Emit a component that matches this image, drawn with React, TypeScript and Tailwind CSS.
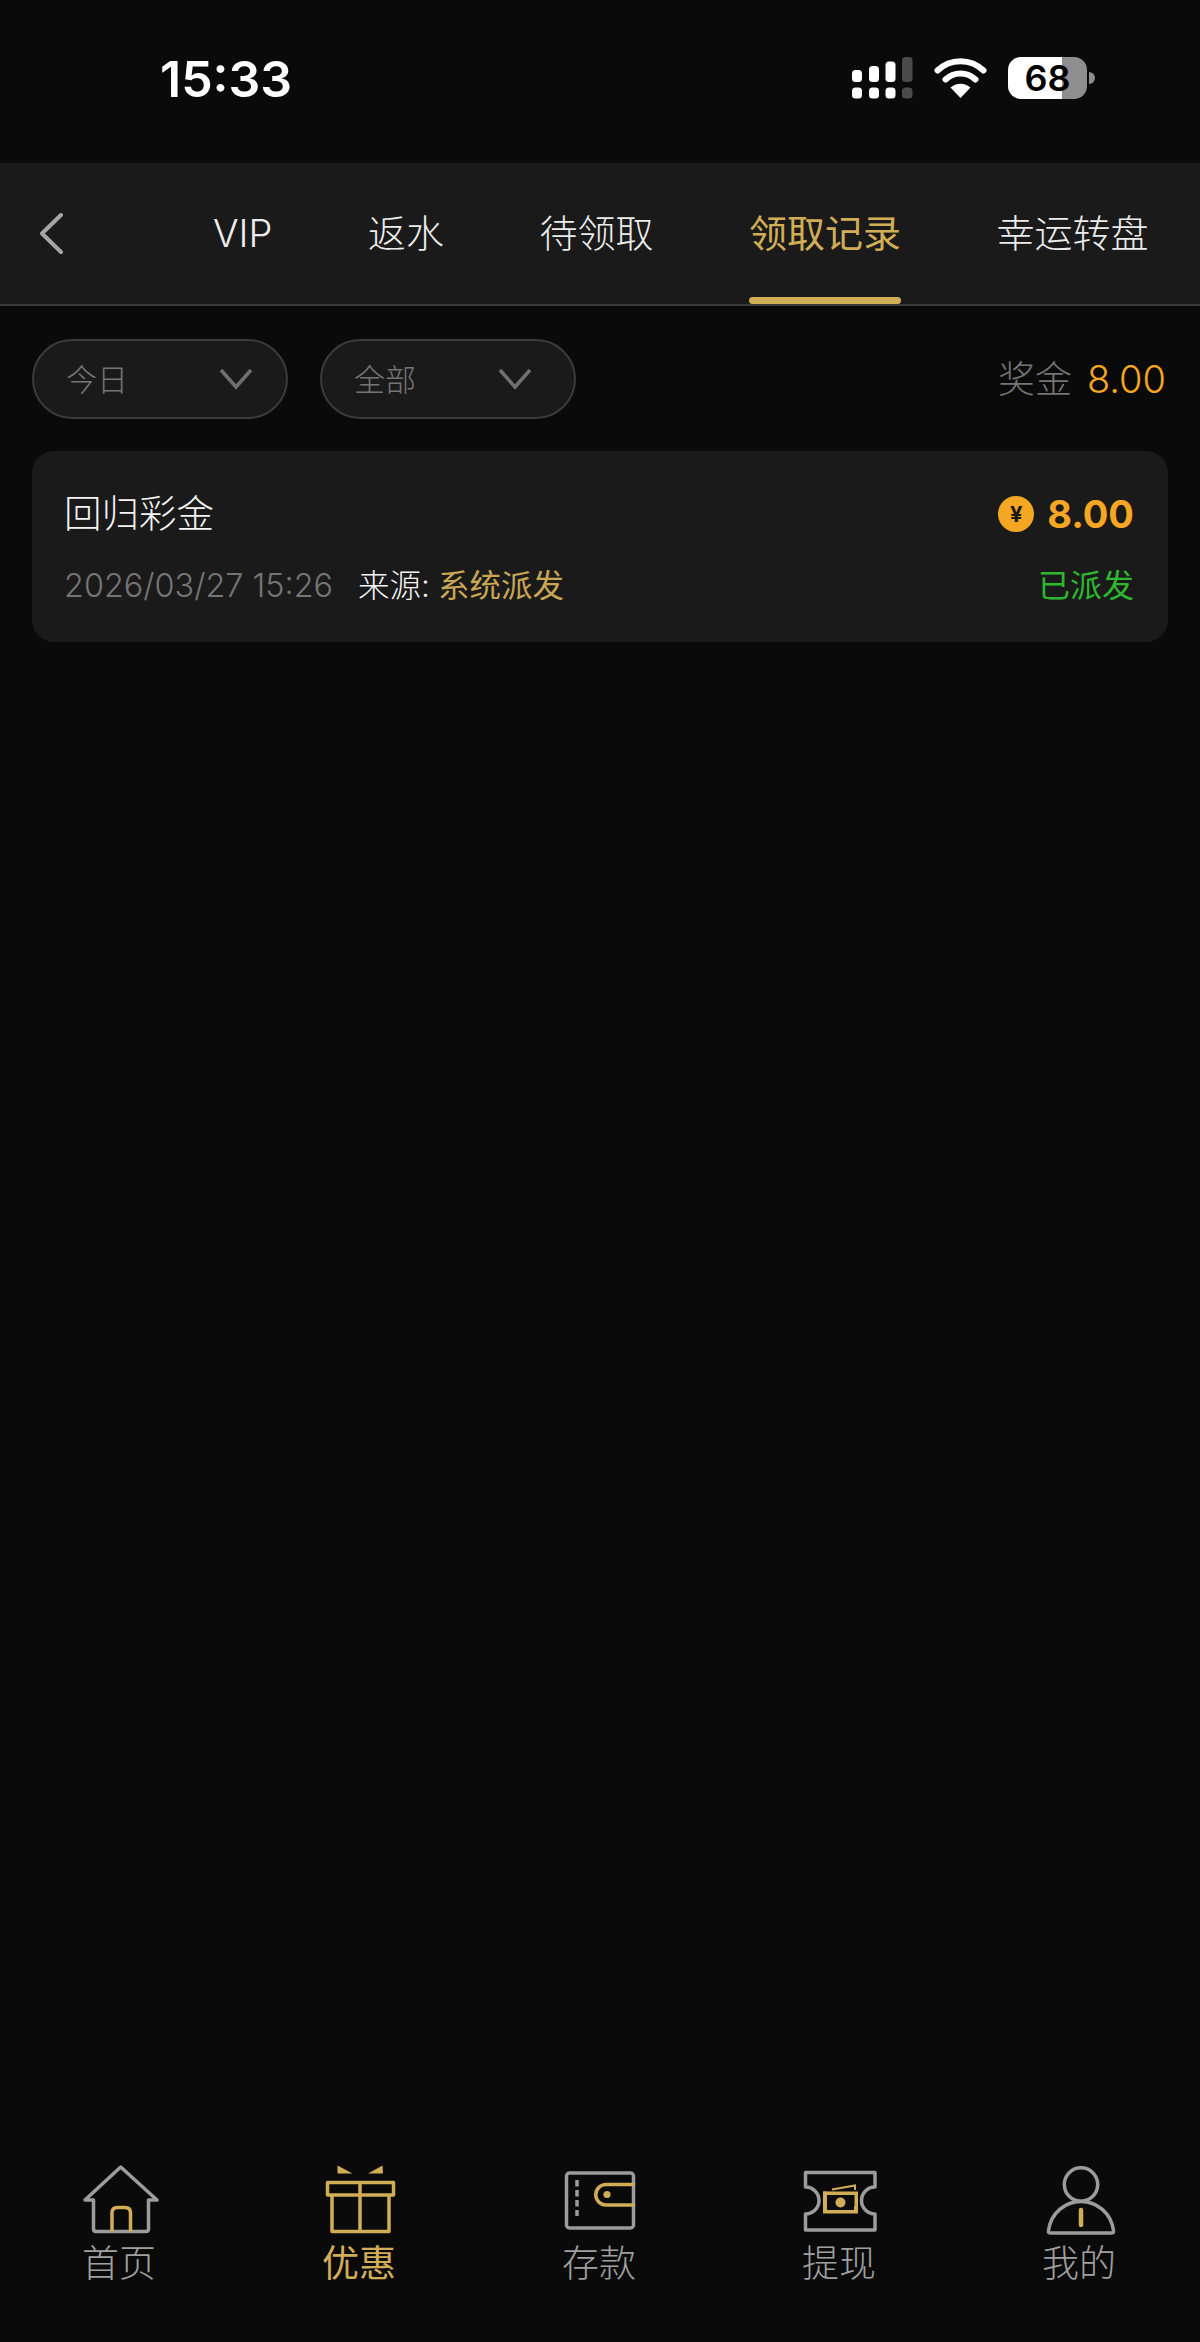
const GOLD = "#d2ad57";
const GRAY = "#9c9c9c";

function StatusBar() {
	return (
		<div className="flex h-[163px] items-start justify-between pl-[160px] pr-[105px] pt-[49px]">
			<span className="text-[50px] font-semibold leading-[60px] text-white">15:33</span>
			<div className="flex items-center pt-[8px]">
				<svg width="61" height="42" viewBox="0 0 61 42" className="mr-[21px]">
					<g fill="#fff">
						<rect x="0" y="13" width="10" height="12" rx="3.5" />
						<rect x="17" y="9" width="10" height="16" rx="3.5" />
						<rect x="33.5" y="4.5" width="10" height="20.5" rx="3.5" />
						<rect x="0" y="30.5" width="10" height="11" rx="3.5" />
						<rect x="17" y="30.5" width="10" height="11" rx="3.5" />
						<rect x="33.5" y="30.5" width="10" height="11" rx="3.5" />
					</g>
					<rect x="50" y="0" width="10.5" height="25" rx="3.5" fill="#4a4a4a" />
					<rect x="50" y="30.5" width="10.5" height="11" rx="3.5" fill="#4a4a4a" />
				</svg>
				<svg width="53" height="40" viewBox="0 0 53 40" className="mr-[21px]">
					<path d="M3.5 12.5 A33 33 0 0 1 49.5 12.5" fill="none" stroke="#fff" strokeWidth="6" strokeLinecap="round" />
					<path d="M11.5 21.5 A21.5 21.5 0 0 1 41.5 21.5" fill="none" stroke="#fff" strokeWidth="6" strokeLinecap="round" />
					<path d="M26.5 40 L16.5 29.5 A15 15 0 0 1 36.5 29.5 Z" fill="#fff" />
				</svg>
				<div className="flex h-[42px] w-[79px] items-center justify-center rounded-[13px] bg-[linear-gradient(90deg,#fff_68%,#8e8e8e_68%)] text-[36px] font-semibold leading-none text-black">
					68
				</div>
				<div className="ml-[2px] h-[12px] w-[6px] rounded-r-full bg-[#8e8e8e]" />
			</div>
		</div>
	);
}

const tabs = ["VIP", "返水", "待领取", "领取记录", "幸运转盘"];

function TabBar() {
	return (
		<div className="flex h-[143px] border-b-2 border-[#3a3a3a] bg-[#1a1a1a]">
			<div className="flex w-[213px] items-center pl-[38px]">
				<svg width="26" height="42" viewBox="0 0 26 42">
					<path d="M23 2 L4 20.5 L23 39" fill="none" stroke="#a6a6a6" strokeWidth="4" strokeLinecap="round" strokeLinejoin="round" />
				</svg>
			</div>
			<div className="flex gap-[95.5px]">
				{tabs.map((tab) => (
					<div key={tab} className="flex flex-col">
						<div
							className={`flex flex-1 items-center pt-[5px] text-[38px] leading-none ${tab === "领取记录" ? "font-normal text-[#d2ad57]" : "font-light text-[#ececec]"}`}
						>
							{tab}
						</div>
						<div className={`h-[7px] rounded-full ${tab === "领取记录" ? "bg-[#d2ad57]" : ""}`} />
					</div>
				))}
			</div>
		</div>
	);
}

function Pill({ label, chevronGap }: { label: string; chevronGap: string }) {
	return (
		<div className={`flex h-[80px] w-[256px] items-center justify-between rounded-full border-2 border-[#3b3b3b] bg-[#1a1a1a] pl-[32px] ${chevronGap}`}>
			<span className="text-[31px] font-light leading-none text-[#757575]">{label}</span>
			<svg width="34" height="22" viewBox="0 0 34 22">
				<path d="M2 2 L17 19 L32 2" fill="none" stroke="#707070" strokeWidth="3.5" />
			</svg>
		</div>
	);
}

function FilterRow() {
	return (
		<div className="flex items-center justify-between pl-[32px] pr-[34px] pt-[33px]">
			<div className="flex gap-[32px]">
				<Pill label="今日" chevronGap="pr-[33px]" />
				<Pill label="全部" chevronGap="pr-[42px]" />
			</div>
			<div className="flex items-center gap-[15px]">
				<span className="text-[37px] font-light leading-none text-[#757575]">奖金</span>
				<span className="text-[38px] font-light leading-none text-[#f5a623]">8.00</span>
			</div>
		</div>
	);
}

function RecordCard() {
	return (
		<div className="ml-[32px] mr-[32px] mt-[32px] flex h-[191px] flex-col justify-center gap-[29px] rounded-[22px] bg-[#1a1a1a] pl-[32px] pr-[34px] pt-[3px]">
			<div className="flex items-center justify-between">
				<span className="text-[37.5px] font-light leading-[46px] text-[#f4f4f4]">回归彩金</span>
				<div className="flex items-center gap-[13px]">
					<span className="flex h-[36px] w-[36px] items-center justify-center rounded-full bg-[#f5a623] text-[22px] font-bold leading-none text-[#1a1a1a]">
						¥
					</span>
					<span className="text-[38px] font-bold leading-none text-[#f5a623]">8.00</span>
				</div>
			</div>
			<div className="flex items-center justify-between leading-[40px]">
				<div className="flex items-center">
					<span className="text-[32.4px] font-light text-[#757575]">2026/03/27 15:26</span>
					<span className="ml-[25px] text-[31.5px] font-light text-[#f4f4f4]">来源:</span>
					<span className="ml-[8px] text-[31.5px] font-normal text-[#c9a654]">系统派发</span>
				</div>
				<span className="text-[32px] font-normal text-[#2fb62f]">已派发</span>
			</div>
		</div>
	);
}

function HomeIcon() {
	return (
		<svg width="80" height="72" viewBox="0 0 80 72">
			<path d="M13.5 36 H5 L40.7 3 L77 36 H68.5 V65 Q68.5 67.5 66 67.5 H16 Q13.5 67.5 13.5 65 Z" fill="none" stroke={GRAY} strokeWidth="3.5" strokeLinejoin="round" />
			<path d="M32 67.5 V49 Q32 43.5 37.5 43.5 H45 Q50.5 43.5 50.5 49 V67.5" fill="none" stroke={GOLD} strokeWidth="3.5" />
		</svg>
	);
}

function GiftIcon() {
	return (
		<svg width="80" height="72" viewBox="0 0 80 72">
			<path d="M7.5 18.5 H73.5 V31 H7.5 Z" fill="none" stroke={GOLD} strokeWidth="3.5" strokeLinejoin="round" />
			<path d="M12 31 V67.5 H69 V31 M40 18.5 V67.5" fill="none" stroke={GOLD} strokeWidth="3.5" strokeLinejoin="round" />
			<path d="M17.5 1.5 L32.5 9.5 H17.5 Z M62.5 1.5 L48 9.5 H63 Z" fill={GOLD} />
		</svg>
	);
}

function WalletIcon() {
	return (
		<svg width="80" height="72" viewBox="0 0 80 72">
			<rect x="6.5" y="9" width="67" height="55" rx="3" fill="none" stroke={GRAY} strokeWidth="3.5" />
			<path d="M17 16 V52" stroke={GRAY} strokeWidth="3.5" strokeDasharray="6.5 3.5" />
			<path d="M75 20.5 H46 A10.2 10.2 0 0 0 46 41 H75" fill="none" stroke={GOLD} strokeWidth="3.5" />
			<circle cx="47" cy="30.5" r="3.6" fill={GOLD} />
		</svg>
	);
}

function TicketIcon() {
	return (
		<svg width="80" height="72" viewBox="0 0 80 72">
			<path d="M5.5 8.5 H75 V23 A13.5 13.5 0 0 0 75 50 V66 H5.5 V50 A13.5 13.5 0 0 0 5.5 23 Z" fill="none" stroke={GRAY} strokeWidth="3.5" strokeLinejoin="round" />
			<rect x="23" y="27.5" width="35" height="22" fill={GOLD} />
			<rect x="27" y="31" width="27.5" height="15" fill="#0b0b0b" />
			<rect x="23" y="27.5" width="4" height="4" fill={GOLD} />
			<rect x="54" y="42" width="4" height="4" fill={GOLD} />
			<circle cx="40.5" cy="38.5" r="5" fill={GOLD} />
			<path d="M32 25.5 L55 21.5 V26" fill="none" stroke={GOLD} strokeWidth="2" />
		</svg>
	);
}

function PersonIcon() {
	return (
		<svg width="80" height="72" viewBox="0 0 80 72">
			<circle cx="41" cy="20.5" r="16.7" fill="none" stroke={GRAY} strokeWidth="3.5" />
			<path d="M10 69 H72 Q74 69 73.5 66.5 C71 49 57 37.5 41 37.5 C25 37.5 11 49 8.5 66.5 Q8 69 10 69 Z" fill="none" stroke={GRAY} strokeWidth="3.5" strokeLinejoin="round" />
			<path d="M41 46 V61" stroke={GOLD} strokeWidth="4.5" strokeLinecap="round" />
		</svg>
	);
}

const navItems = [
	{ label: "首页", icon: <HomeIcon />, active: false },
	{ label: "优惠", icon: <GiftIcon />, active: true },
	{ label: "存款", icon: <WalletIcon />, active: false },
	{ label: "提现", icon: <TicketIcon />, active: false },
	{ label: "我的", icon: <PersonIcon />, active: false },
];

function BottomNav() {
	return (
		<div className="grid h-[178px] grid-cols-5">
			{navItems.map((item) => (
				<div key={item.label} className="flex flex-col items-center">
					{item.icon}
					<span className={`mr-[2px] mt-[8px] text-[37px] leading-[40px] ${item.active ? "font-normal text-[#d2ad57]" : "font-light text-[#a0a0a0]"}`}>
						{item.label}
					</span>
				</div>
			))}
		</div>
	);
}

export default function App() {
	return (
		<div
			className="flex min-h-[2342px] w-[1200px] flex-col bg-[#0a0a0a]"
			style={{ fontFamily: 'Inter, "Noto Sans CJK SC", sans-serif' }}
		>
			<StatusBar />
			<TabBar />
			<div className="flex-1">
				<FilterRow />
				<RecordCard />
			</div>
			<BottomNav />
		</div>
	);
}
